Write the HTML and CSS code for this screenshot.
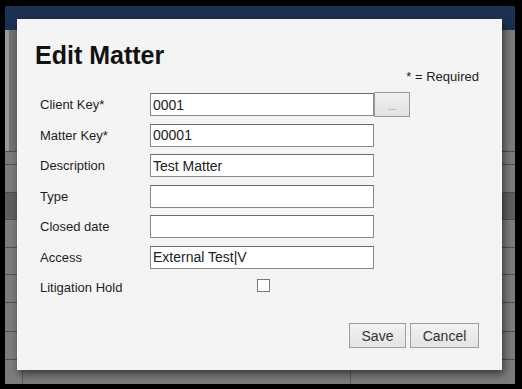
FILE: index.html
```html
<!DOCTYPE html>
<html>
<head>
<meta charset="utf-8">
<title>Edit Matter</title>
<link rel="stylesheet" href="styles.css">
</head>
<body>
<div class="screen">
  <div class="backdrop">
    <div class="topbar"></div>
    <div class="toolbar"></div>
    <div class="row h12"></div>
    <div class="row h27"></div>
    <div class="row h26 selected"></div>
    <div class="row h27"></div>
    <div class="row h26"></div>
    <div class="row h27"></div>
    <div class="row h28"></div>
    <div class="row h27"></div>
    <div class="row last"></div>
  </div>
  <div class="dialog">
    <h1 class="title">Edit Matter</h1>
    <div class="required">* = Required</div>
    <div class="form">
      <label class="label">Client Key*</label>
      <input class="input" type="text" value="0001">
      <button class="lookup" type="button">...</button>

      <label class="label">Matter Key*</label>
      <input class="input" type="text" value="00001">

      <label class="label">Description</label>
      <input class="input" type="text" value="Test Matter">

      <label class="label">Type</label>
      <input class="input" type="text" value="">

      <label class="label">Closed date</label>
      <input class="input" type="text" value="">

      <label class="label">Access</label>
      <input class="input" type="text" value="External Test|V">

      <label class="label">Litigation Hold</label>
      <span class="check"></span>
    </div>
    <div class="actions">
      <button class="btn save" type="button">Save</button>
      <button class="btn cancel" type="button">Cancel</button>
    </div>
  </div>
</div>
</body>
</html>
```

FILE: styles.css
```css
html, body {
  margin: 0;
  padding: 0;
  background: #000;
}

body {
  width: 522px;
  height: 389px;
  overflow: hidden;
  font-family: "Liberation Sans", Arial, sans-serif;
}

.screen {
  position: relative;
  margin: 6px 7px 5px 5px;
  width: 510px;
  height: 378px;
  background: #787878;
  overflow: hidden;
}

.backdrop {
  display: flex;
  flex-direction: column;
  height: 100%;
}

.topbar {
  height: 24px;
  background: #1c3152;
  flex: none;
}

.toolbar {
  height: 121px;
  flex: none;
  background: linear-gradient(to right, #9a9a9a 0, #9a9a9a 4px, #727272 4px, #7a7a7a 100%);
  border-bottom: 1px solid #4e4e4e;
}

.row {
  flex: none;
  background: linear-gradient(to right, #7c7c7c 0, #7c7c7c 17px, #575757 17px, #575757 18px, #7c7c7c 18px, #7c7c7c 345px, #5a5a5a 345px, #5a5a5a 346px, #7c7c7c 346px);
  border-bottom: 1px solid #4f4f4f;
}

.row.selected {
  background: #5f5f5f;
}

.h12 { height: 12px; }
.h26 { height: 26px; }
.h27 { height: 27px; }
.h28 { height: 28px; }
.row.last { flex: 1; border-bottom: none; }

.dialog {
  position: absolute;
  left: 12px;
  top: 13px;
  width: 485px;
  height: 351px;
  box-sizing: border-box;
  padding: 0 23px 22px 18px;
  background: #f4f4f4;
  box-shadow: 2px 4px 8px rgba(0, 0, 0, 0.55);
  display: flex;
  flex-direction: column;
}

.title {
  margin: 23px 0 0 0;
  font-size: 25px;
  line-height: 27px;
  font-weight: bold;
  color: #111;
}

.required {
  text-align: right;
  font-size: 13px;
  line-height: 15px;
  color: #222;
}

.form {
  margin: 9px 0 0 5px;
  display: grid;
  grid-template-columns: 110px 224px 36px;
  grid-auto-rows: 23px;
  row-gap: 7.5px;
  align-items: center;
}

.label {
  grid-column: 1;
  font-size: 13px;
  line-height: 15px;
  color: #1e1e1e;
}

.input {
  grid-column: 2;
  box-sizing: border-box;
  width: 224px;
  height: 23px;
  margin: 0;
  padding: 0 2px;
  border: 1px solid #8a8a8a;
  border-top-color: #6c6c6c;
  border-radius: 0;
  background: #fff;
  font-family: "Liberation Sans", Arial, sans-serif;
  font-size: 14px;
  color: #222;
  outline: none;
}

.lookup {
  grid-column: 3;
  box-sizing: border-box;
  width: 36px;
  height: 25px;
  margin: -1px 0 0 0;
  padding: 2px 0 0 0;
  align-self: start;
  border: 1px solid #9a9a9a;
  border-radius: 0;
  background: linear-gradient(#f0f0f0, #e2e2e2);
  font-family: "Liberation Sans", Arial, sans-serif;
  font-size: 11px;
  color: #8a8a8a;
  line-height: 23px;
}

.check {
  grid-column: 2;
  justify-self: center;
  width: 13px;
  height: 13px;
  box-sizing: border-box;
  border: 1px solid #7a7a7a;
  background: #fff;
  margin-top: -5px;
  margin-left: 2px;
}

.actions {
  margin-top: auto;
  display: flex;
  justify-content: flex-end;
  gap: 4px;
}

.btn {
  box-sizing: border-box;
  height: 25px;
  margin: 0;
  padding: 0;
  border: 1px solid #9e9e9e;
  border-radius: 0;
  background: linear-gradient(#f2f2f2, #e3e3e3);
  font-family: "Liberation Sans", Arial, sans-serif;
  font-size: 14px;
  color: #333;
}

.save { width: 57px; }
.cancel { width: 69px; }
```
